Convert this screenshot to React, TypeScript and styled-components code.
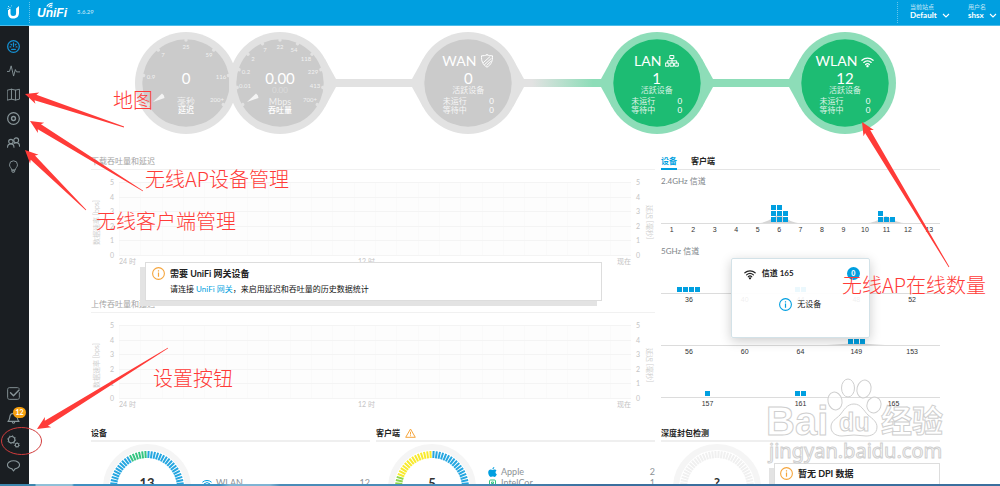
import React from "react";
import styled, { createGlobalStyle, css } from "styled-components";

const color = {
  blue: "#009fe0",
  green: "#1dbc73",
  paleGreen: "#8dddb8",
  gray: "#cbcbcb",
  paleGray: "#e2e2e2",
  orange: "#f5a53c",
  red: "#ff3b38",
  text: "#8d9296",
  dark: "#222",
};

const Global = createGlobalStyle`
  * { box-sizing: border-box; }
  html, body { margin: 0; padding: 0; background: #fff; }
  body { font-family: Lato, "Noto Sans CJK SC", sans-serif; font-size: 8px; line-height: 14px; color: ${color.dark}; }
  button { margin: 0; padding: 0; border: 0; background: none; font: inherit; color: inherit; cursor: pointer; text-align: left; }
  a { color: inherit; text-decoration: none; }
  h2, h3, p, ul { margin: 0; padding: 0; font: inherit; list-style: none; }
  svg { display: block; flex: none; }
`;

const Shell = styled.div`
  position: relative;
  display: flex;
  flex-direction: column;
  height: 100vh;
  overflow: hidden;
`;

/* ---------- header ---------- */

const Header = styled.header`
  display: flex;
  align-items: stretch;
  flex: none;
  height: 26px;
  color: #fff;
  background: ${color.blue};
  border-bottom: 1px solid #4dbce9;
`;

const Mark = styled.div`
  display: flex;
  align-items: center;
  width: 29px;
  padding: 0 0 2px 7px;
`;

const Divider = styled.div`
  margin: 2px 0;
  border-left: 1px dotted rgba(255, 255, 255, 0.4);
`;

const Wordmark = styled.a`
  position: relative;
  margin-left: 7px;
  padding-top: 6px;
  font: italic bold 12px/14px "Liberation Sans Narrow", "Liberation Sans", sans-serif;
  svg { position: absolute; left: 9px; top: 2px; }
`;

const Version = styled.span`
  margin-left: 10px;
  font-size: 6px;
  line-height: 24px;
  font-weight: bold;
  color: rgba(255, 255, 255, 0.65);
`;

const Account = styled.div`
  display: flex;
  margin-left: auto;
`;

const Menu = styled.button<{ $width: number }>`
  display: block;
  width: ${(p) => p.$width}px;
  padding-bottom: 3px;
  small { display: block; font-size: 6px; line-height: 8px; color: rgba(255, 255, 255, 0.75); }
  span { display: flex; align-items: center; gap: 5px; font-weight: bold; line-height: 9px; }
`;

/* ---------- sidebar ---------- */

const Body = styled.div`
  display: flex;
  flex: 1;
  min-height: 0;
`;

const Sidebar = styled.nav`
  display: flex;
  flex-direction: column;
  justify-content: space-between;
  flex: none;
  width: 29px;
  padding: 8px 0 7px;
  background: #1a1e22;
`;

const NavItem = styled.a<{ $active?: boolean }>`
  position: relative;
  display: flex;
  align-items: center;
  justify-content: center;
  height: 24px;
  padding-right: 2px;
  color: ${(p) => (p.$active ? "#1590d2" : "#89969a")};
`;

const Count = styled.span`
  position: absolute;
  top: 2px;
  left: 13px;
  width: 13px;
  border-radius: 6px;
  background: #f7a00f;
  color: #fff;
  font-size: 7px;
  font-weight: bold;
  line-height: 11px;
  text-align: center;
`;

/* ---------- main ---------- */

const Main = styled.main`
  flex: 1;
  min-width: 0;
  padding: 6px 60px 0 62px;
  overflow-y: auto;
  scrollbar-width: none;
`;

const Health = styled.section`
  display: flex;
  align-items: center;
  padding: 0 44px;
  margin-bottom: 20px;
`;

const Link = styled.div<{ $from: string; $to: string }>`
  flex: 1;
  height: 8px;
  background: linear-gradient(90deg, ${(p) => p.$from} 15%, ${(p) => p.$to} 85%);
`;

const Disc = styled.div<{ $overlap?: boolean; $dial?: boolean }>`
  position: relative;
  flex: none;
  width: 102px;
  height: 102px;
  margin-left: ${(p) => (p.$overlap ? "-8px" : 0)};
  padding-top: ${(p) => (p.$dial ? 39 : 21)}px;
  color: #fff;
  text-align: center;
  > svg { position: absolute; inset: 0; overflow: visible; }
`;

const DiscText = styled.div`
  position: relative;
`;

const DiscTitle = styled.h2`
  display: flex;
  justify-content: center;
  align-items: center;
  gap: 4px;
  margin-bottom: 2px;
  font-size: 14px;
  line-height: 16px;
`;

const DiscValue = styled.div`
  font-size: 15px;
  line-height: 15px;
`;

const DiscNote = styled.div<{ $faint?: boolean }>`
  height: 8px;
  margin-bottom: 3px;
  line-height: 8px;
  opacity: ${(p) => (p.$faint ? 0.3 : 0.8)};
`;

const DiscUnit = styled.div<{ $strong?: boolean }>`
  line-height: 9px;
  font-size: ${(p) => (p.$strong ? 8 : 9)}px;
  font-weight: ${(p) => (p.$strong ? 500 : 400)};
  opacity: ${(p) => (p.$strong ? 1 : 0.7)};
`;

const DiscRow = styled.div`
  display: flex;
  justify-content: space-between;
  width: 51px;
  margin: 0 auto;
  line-height: 9px;
  span { opacity: 0.85; }
`;

const Columns = styled.div`
  display: grid;
  grid-template-columns: repeat(3, minmax(0, 1fr));
  column-gap: 6px;
  row-gap: 17px;
`;

const Charts = styled.section`
  position: relative;
  grid-column: span 2;
  display: flex;
  flex-direction: column;
  gap: 31px;
`;

const ChartTitle = styled.h3`
  height: 16px;
  border-bottom: 1px solid #f1f1f1;
  color: #a3a3a3;
`;

const ChartGrid = styled.div`
  display: grid;
  grid-template-columns: 16px 12px 1fr 14px 10px;
  padding-top: 8px;
  color: #c4c4c4;
  font-size: 7px;
`;

const AxisName = styled.div<{ $up?: boolean }>`
  align-self: center;
  justify-self: ${(p) => (p.$up ? "start" : "center")};
  writing-mode: vertical-rl;
  text-orientation: sideways;
  line-height: 10px;
  white-space: nowrap;
  color: #cfcfcf;
  ${(p) => p.$up && css`transform: rotate(180deg);`}
`;

const Scale = styled.div<{ $right?: boolean }>`
  display: flex;
  flex-direction: column;
  justify-content: space-between;
  height: 81px;
  padding-left: ${(p) => (p.$right ? 5 : 3)}px;
  line-height: 8px;
`;

const Plot = styled.div`
  display: flex;
  flex-direction: column;
  justify-content: space-between;
  height: 74px;
  margin-top: 4px;
  background: repeating-linear-gradient(90deg, #fafafa 0 1px, #fdfdfd 1px calc(100% / 24));
  i { height: 1px; background: #f4f4f4; }
`;

const Times = styled.div`
  display: grid;
  grid-template-columns: 12fr 13fr auto;
  line-height: 10px;
`;

const Notice = styled.aside`
  display: grid;
  grid-template-columns: 13px 1fr;
  column-gap: 5px;
  padding: 4px 6px;
  background: #fff;
  border: 1px solid #ddd;
  box-shadow: -5px 5px 0 #e3e3e3;
  h3 { font-size: 9px; font-weight: bold; line-height: 13px; }
  p { grid-column: 2; margin-top: 3px; line-height: 13px; color: #111; }
  a { color: ${color.blue}; }
`;

const GatewayNotice = styled(Notice)`
  position: absolute;
  top: 108px;
  left: 54px;
  right: 53px;
`;

/* ---------- channels ---------- */

const Channels = styled.section`
  position: relative;
`;

const Tabs = styled.div`
  display: flex;
  gap: 14px;
  height: 16px;
  border-bottom: 1px solid #e5e5e5;
`;

const Tab = styled.button<{ $active?: boolean }>`
  height: 16px;
  font-weight: bold;
  color: ${(p) => (p.$active ? color.blue : color.dark)};
  border-bottom: 2px solid ${(p) => (p.$active ? color.blue : "transparent")};
`;

const Band = styled.h3`
  padding-top: 4px;
  height: 18px;
  color: #7d8488;
`;

const BandRows = styled.div`
  display: flex;
  flex-direction: column;
  gap: 5px;
  & + ${Band} { margin-top: 5px; }
`;

const ChannelRow = styled.ul`
  display: flex;
`;

const ChannelCell = styled.li`
  flex: 1;
  font: 7px/11px "Liberation Sans", sans-serif;
  color: #333;
  text-align: center;
`;

const Stack = styled.div`
  position: relative;
  display: flex;
  justify-content: center;
  align-items: flex-end;
  gap: 1px;
  height: 36px;
  padding-bottom: 1px;
  border-bottom: 1px solid #dcdcdc;
  > svg { position: absolute; bottom: 0; left: 50%; transform: translateX(-50%); }
`;

const Pile = styled.div`
  position: relative;
  display: flex;
  flex-direction: column;
  gap: 1px;
  i { width: 5px; height: 5px; background: ${color.blue}; }
`;

const Popup = styled.div`
  position: absolute;
  top: 104px;
  left: 25%;
  width: 139px;
  height: 80px;
  padding: 8px 9px 0 12px;
  border: 1px solid #d3e2e8;
  border-radius: 2px;
  background: rgba(255, 255, 255, 0.92);
  box-shadow: 0 3px 12px rgba(0, 0, 0, 0.2);
`;

const PopupHead = styled.div`
  display: flex;
  align-items: center;
  gap: 6px;
  font-weight: bold;
  line-height: 13px;
  b { width: 13px; margin-left: auto; border-radius: 50%; background: ${color.blue}; color: #fff; font-size: 7px; text-align: center; }
`;

const PopupBody = styled.div`
  display: flex;
  align-items: center;
  justify-content: center;
  gap: 5px;
  margin-top: 17px;
  padding-right: 3px;
`;

/* ---------- summary cards ---------- */

const Card = styled.section`
  min-width: 0;
`;

const CardTitle = styled.h3`
  display: flex;
  align-items: center;
  gap: 5px;
  height: 16px;
  border-bottom: 2px solid #efefef;
  font-weight: bold;
`;

const CardBody = styled.div`
  display: flex;
  align-items: flex-start;
  height: 90px;
  padding: 2px 0 0 12px;
`;

const Dial = styled.div`
  position: relative;
  flex: none;
  width: 88px;
  height: 88px;
  span { position: absolute; left: 0; right: 0; top: 32px; font-size: 13px; line-height: 14px; font-weight: bold; text-align: center; color: #333; }
`;

const Legend = styled.ul<{ $offset: number }>`
  flex: 1;
  margin-left: 11px;
  padding-top: ${(p) => p.$offset}px;
  font-size: 9px;
  line-height: 11px;
  color: ${color.text};
  li { display: flex; align-items: center; gap: 4px; }
  b { margin-left: auto; font-weight: 400; }
`;

const Bullet = styled.span<{ $tone: string }>`
  display: flex;
  justify-content: center;
  width: 10px;
  color: ${(p) => p.$tone};
`;

const DpiNotice = styled(Notice)`
  flex: 1;
  height: 40px;
  margin: 19px 0 0 13px;
  padding: 3px 5px;
`;

const Taskbar = styled.footer`
  flex: none;
  height: 2px;
  background: linear-gradient(90deg, #3c86ad 0 35px, #8fc0d8 36px 72px, #3f8fc0 74px 22%, #7fb4d4 23% 27%, #4a8cb8 28% 46%, #3b6f9e 60% 100%);
`;

/* ---------- overlays ---------- */

const Annotations = styled.div`
  position: absolute;
  inset: 0;
  pointer-events: none;
  > svg { position: absolute; inset: 0; width: 100%; height: 100%; }
`;

const Caption = styled.span<{ $x: number; $y: number }>`
  position: absolute;
  left: ${(p) => p.$x}px;
  top: ${(p) => p.$y}px;
  font: 300 20px/24px "Noto Sans CJK SC", sans-serif;
  color: ${color.red};
  white-space: nowrap;
`;

const Watermark = styled.svg`
  position: absolute;
  right: 50px;
  bottom: 18px;
  pointer-events: none;
  fill: rgba(255, 255, 255, 0.5);
  stroke: #cfcfcf;
  stroke-width: 1;
`;

/* ---------- icons ---------- */

function Icon({ size = 13, width = 1, children }: { size?: number; width?: number; children: React.ReactNode }) {
  return (
    <svg width={size} height={size} viewBox="0 0 14 14" fill="none" stroke="currentColor" strokeWidth={width} strokeLinejoin="round" strokeLinecap="round" aria-hidden="true">
      {children}
    </svg>
  );
}

const Wifi = ({ size = 13 }: { size?: number }) => (
  <Icon size={size} width={1.4}>
    <path d="M1 5.6a9 9 0 0 1 12 0M3 8a6 6 0 0 1 8 0M5 10.2a3 3 0 0 1 4 0" />
    <circle cx="7" cy="12" r=".6" fill="currentColor" />
  </Icon>
);

const Info = ({ tone }: { tone: string }) => (
  <svg width="13" height="13" viewBox="0 0 13 13" fill="none" stroke={tone} aria-hidden="true">
    <circle cx="6.5" cy="6.5" r="5.9" strokeWidth="1.1" />
    <path d="M6.5 5.6v4.2M6.5 3.2v1.2" strokeWidth="1.2" />
  </svg>
);

const Chevron = () => (
  <svg width="8" height="5" viewBox="0 0 8 5" fill="none" stroke="currentColor" strokeWidth="1.1" aria-hidden="true">
    <path d="M1 1l3 3 3-3" />
  </svg>
);

const Shield = () => (
  <Icon size={14}>
    <path d="M7 .8c1.700.8 3.500 1 5.500 1 .2 5-1 8.700-5.500 11.400C2.500 10.500 1.300 6.800 1.500 1.800c2 0 3.800-.2 5.500-1z" />
    <path d="M3.500 8.500L9.800 2.800M4.700 10.500l6.500-6M6.800 11.300l4.200-4" />
  </Icon>
);

const Network = () => (
  <Icon size={14}>
    <path d="M5.200 1.500h3.600v3H5.200zM.7 9h3.200v3.200H.7zM5.400 9h3.200v3.200H5.400zM10.100 9h3.200v3.200h-3.200zM7 4.500V9M2.300 9V6.800h9.400V9" />
  </Icon>
);

const topNav = [
  { name: "仪表盘", icon: <><circle cx="7" cy="7" r="6.3" strokeWidth="1.4" /><path d="M7 3v4M3.300 7.500h.8M9.900 7.500h.8M4.300 4.600l.6.6M9.700 4.600l-.6.6M5 10h4" strokeWidth="1.4" /></> },
  { name: "统计", icon: <path d="M.4 8h2.300l1.800-6 2.600 11 1.900-7 1.200 2.500h3.600" /> },
  { name: "地图", icon: <path d="M.6 2.300l4.200-1 4.400 1 4.200-1v10.700l-4.200 1-4.400-1-4.200 1zM4.800 1.300v10.700M9.200 2.300v10.700" /> },
  { name: "设备", icon: <><circle cx="7" cy="7" r="6.3" strokeWidth="1.3" /><circle cx="7" cy="7" r="2.1" strokeWidth="1.5" /></> },
  { name: "客户端", icon: <><circle cx="4.200" cy="6" r="2.400" strokeWidth="1.200" /><circle cx="9.900" cy="4.600" r="2.600" strokeWidth="1.200" /><path d="M.6 12c0-2.300 1.400-3.500 3.600-3.500s3.300 1.200 3.300 3.500M7.600 8c.6-.7 1.300-.9 2.300-.9 2.300 0 3.600 1.400 3.600 4" strokeWidth="1.200" /></> },
  { name: "洞察", icon: <path d="M5 10.200C5 8.500 2.700 7.700 2.700 5.200a4.300 4.300 0 0 1 8.600 0c0 2.500-2.300 3.300-2.300 5zM5.400 11.500h3.200l-.8 1.700H6.200z" /> },
];

const bottomNav = [
  { name: "任务", icon: <><path d="M13.300 6v5.400c0 1.100-.8 1.900-1.900 1.900H2.600c-1.100 0-1.900-.8-1.900-1.900V2.600C.7 1.500 1.500.7 2.600.7h8.800c.8 0 1.300.3 1.600.9" /><path d="M3.800 6.200L7 9.400l6-6.200" strokeWidth="1.500" /></> },
  { name: "警报", badge: "12", icon: <path d="M1 11.200h12C11 9.600 11.300 7.800 10.800 5.600A3.900 3.900 0 0 0 7 2.500a3.900 3.900 0 0 0-3.800 3.100c-.5 2.200-.2 4-2.200 5.600zM5.700 11.500c0 2.200 2.600 2.200 2.600 0" strokeWidth="1.200" /> },
  { name: "设置", icon: <><circle cx="5" cy="5" r="3.400" strokeWidth="1.200" /><circle cx="5" cy="5" r="4.300" strokeDasharray="1.300 2.050" strokeLinecap="butt" /><circle cx="10.800" cy="10.800" r="1.900" strokeWidth="1.200" /><circle cx="10.800" cy="10.800" r="2.700" strokeDasharray="1 1.400" strokeLinecap="butt" /></> },
  { name: "聊天", icon: <path d="M5.400 10.600C2.500 10.200.5 8.600.5 6.300.5 3.900 3.300 1.900 7 1.900s6.500 2 6.500 4.400c0 2.300-2 3.900-4.900 4.300L7 12.900z" strokeWidth="1.200" /> },
];

/* ---------- health discs ---------- */

type DialMark = [string, number, number];

const latencyMarks: DialMark[] = [["0.9", -35, -6], ["7", -23, -28], ["25", 0, -36], ["59", 23, -28], ["116", 35, -6], ["200+", 31, 17]];
const speedMarks: DialMark[] = [["0.01", -35, 3], ["0.2", -34, -11], ["2", -27, -24], ["7", -15, -33], ["22", 0, -36], ["54", 14, -33], ["118", 26, -24], ["229", 33, -11], ["413", 35, 3], ["700+", 30, 17]];

function DiscShape({ ring, fill, left, right, marks, steps = 0 }: { ring: string; fill: string; left?: boolean; right?: boolean; marks?: DialMark[]; steps?: number }) {
  return (
    <svg width="102" height="102" viewBox="-51 -51 102 102" aria-hidden="true">
      <circle r="51" fill={ring} />
      {left && <path d="M-44.700 -24.600L-56 -4V4L-44.700 24.600z" fill={ring} />}
      {right && <path d="M44.700 -24.600L56 -4V4L44.700 24.600z" fill={ring} />}
      <circle r="43.7" fill={fill} />
      {marks && (
        <>
          {Array.from({ length: steps + 1 }, (_, i) => (
            <circle key={i} cy="-43" r="1.7" fill={ring} transform={`rotate(${-120 + (240 / steps) * i})`} />
          ))}
          {marks.map(([label, x, y]) => (
            <text key={label} x={x} y={y + 2} fontSize="6" textAnchor="middle" fill="#fff" fillOpacity=".75">{label}</text>
          ))}
          <path d="M-33 19L-24 10.500q2.500 1.500 2.500 4.500z" fill="#f4f4f4" />
        </>
      )}
    </svg>
  );
}

function Meter({ value, sub, unit, name, marks, steps, right }: { value: string; sub?: string; unit: string; name: string; marks: DialMark[]; steps: number; right?: boolean }) {
  return (
    <Disc $dial $overlap={right}>
      <DiscShape ring={color.paleGray} fill={color.gray} marks={marks} steps={steps} right={right} />
      <DiscText>
        <DiscValue>{value}</DiscValue>
        <DiscNote $faint>{sub}</DiscNote>
        <DiscUnit>{unit}</DiscUnit>
        <DiscUnit $strong>{name}</DiscUnit>
      </DiscText>
    </Disc>
  );
}

function Status({ name, icon, value, up, right }: { name: string; icon: React.ReactNode; value: number; up?: boolean; right?: boolean }) {
  return (
    <Disc>
      <DiscShape ring={up ? color.paleGreen : color.paleGray} fill={up ? color.green : color.gray} left right={right} />
      <DiscText>
        <DiscTitle>{name}{icon}</DiscTitle>
        <DiscValue>{value}</DiscValue>
        <DiscNote>活跃设备</DiscNote>
        <DiscRow><span>未运行</span>0</DiscRow>
        <DiscRow><span>等待中</span>0</DiscRow>
      </DiscText>
    </Disc>
  );
}

/* ---------- charts ---------- */

const levels = [5, 4, 3, 2, 1, 0];

function History({ title }: { title: string }) {
  return (
    <div>
      <ChartTitle>{title}</ChartTitle>
      <ChartGrid>
        <AxisName $up>数据速率 [bps]</AxisName>
        <Scale>{levels.map((n) => <span key={n}>{n}</span>)}</Scale>
        <div>
          <Plot>{levels.map((n) => <i key={n} />)}</Plot>
          <Times><span>24 时</span><span>12 时</span><span>现在</span></Times>
        </div>
        <Scale $right>{levels.map((n) => <span key={n}>{n}</span>)}</Scale>
        <AxisName>延迟 [毫秒]</AxisName>
      </ChartGrid>
    </div>
  );
}

type Channel = { id: number; piles?: number[]; spread?: [number, number] };

const band24: Channel[] = Array.from({ length: 13 }, (_, i) => {
  const id = i + 1;
  if (id === 6) return { id, piles: [3, 3, 2], spread: [38, 9] };
  if (id === 11) return { id, piles: [2, 1, 1], spread: [36, 7] };
  return { id };
});

const band5: Channel[][] = [
  [{ id: 36, piles: [1, 1, 1, 1] }, { id: 40 }, { id: 44, piles: [1, 1] }, { id: 48 }, { id: 52 }],
  [{ id: 56 }, { id: 60 }, { id: 64 }, { id: 149, piles: [1, 1, 1], spread: [68, 2] }, { id: 153 }],
  [{ id: 157, piles: [1] }, { id: 161, piles: [1, 1] }, { id: 165 }],
];

function Row({ channels }: { channels: Channel[] }) {
  return (
    <ChannelRow>
      {channels.map(({ id, piles = [], spread }) => (
        <ChannelCell key={id}>
          <Stack>
            {spread && (
              <svg width={spread[0]} height={spread[1]} viewBox="0 0 10 10" preserveAspectRatio="none" aria-hidden="true">
                <path d="M0 10C2 9 3 5 5 0c2 5 3 9 5 10z" fill="#d6d6d6" />
              </svg>
            )}
            {piles.map((n, i) => (
              <Pile key={i}>{Array.from({ length: n }, (_, k) => <i key={k} />)}</Pile>
            ))}
          </Stack>
          {id}
        </ChannelCell>
      ))}
    </ChannelRow>
  );
}

function TickDial({ value, tone }: { value: string; tone: (angle: number) => string }) {
  return (
    <Dial>
      <svg width="88" height="88" viewBox="-44 -44 88 88" aria-hidden="true">
        <circle r="41" fill="none" stroke="#f5f5f5" strokeWidth="6" />
        {Array.from({ length: 72 }, (_, i) => {
          const angle = i * 5 + 2.5;
          return <path key={i} d="M0 -37V-30" stroke={tone(angle)} strokeWidth="2" transform={`rotate(${angle})`} />;
        })}
      </svg>
      <span>{value}</span>
    </Dial>
  );
}

function AccountMenu({ label, value, width }: { label: string; value: string; width: number }) {
  return (
    <Menu $width={width}>
      <small>{label}</small>
      <span>{value}<Chevron /></span>
    </Menu>
  );
}

/* ---------- arrows ---------- */

function arrow([x1, y1]: number[], [x2, y2]: number[]) {
  const length = Math.hypot(x2 - x1, y2 - y1);
  const dx = (x2 - x1) / length;
  const dy = (y2 - y1) / length;
  const at = (along: number, side: number) => `${x1 + dx * along - dy * side},${y1 + dy * along + dx * side}`;
  return [at(0, 0), at(13, 6), at(11, 3), at(length, 0.4), at(length, -0.4), at(11, -3), at(13, -6)].join(" ");
}

const arrows = [
  [[25, 94], [124, 127]],
  [[30, 121], [143, 191]],
  [[25, 150], [86, 210]],
  [[37, 429], [168, 348]],
  [[862, 122], [949, 267]],
];

export default function App() {
  return (
    <Shell>
      <Global />
      <Header>
        <Mark>
          <svg width="13" height="14" viewBox="0 0 13 14" aria-hidden="true">
            <path d="M3.500 3.500V8c0 2 .8 3 2.600 3 2.400 0 3-1 3-3V3.500L12 1v6.500c0 3.800-1.800 6-5.700 6C2.700 13.500 1 11.500 1 8V5h1V4h1.500z" fill="#fff" />
            <path d="M1 1h1v1H1zM2.500 2.200h1v1h-1zM.5 3h1v1h-1zM4 .5h.8v.8H4z" fill="#fff" opacity=".8" />
          </svg>
        </Mark>
        <Divider />
        <Wordmark href="#">
          UniFi
          <svg width="10" height="7" viewBox="0 0 10 7" fill="none" stroke="#fff" strokeWidth="1.1" aria-hidden="true">
            <path d="M.8 4.500C2 2.200 4 1 6.800 1.200M2.600 5.200C3.500 3.800 4.800 3 6.500 3.200M4.500 6c.5-.7 1-1 1.800-1" />
          </svg>
        </Wordmark>
        <Version>5.6.29</Version>
        <Account>
          <Divider />
          <AccountMenuGroup>
            <AccountMenu label="当前站点" value="Default" width={58} />
            <AccountMenu label="用户名" value="shsx" width={32} />
          </AccountMenuGroup>
        </Account>
      </Header>

      <Body>
        <Sidebar>
          <div>
            {topNav.map((item, i) => (
              <NavItem key={item.name} href="#" aria-label={item.name} $active={i === 0}>
                <Icon>{item.icon}</Icon>
              </NavItem>
            ))}
          </div>
          <div>
            {bottomNav.map((item) => (
              <NavItem key={item.name} href="#" aria-label={item.name}>
                <Icon>{item.icon}</Icon>
                {item.badge && <Count>{item.badge}</Count>}
              </NavItem>
            ))}
          </div>
        </Sidebar>

        <Main>
          <Health>
            <Meter value="0" unit="毫秒" name="延迟" marks={latencyMarks} steps={6} />
            <Meter value="0.00" sub="0.00" unit="Mbps" name="吞吐量" marks={speedMarks} steps={10} right />
            <Link $from={color.paleGray} $to={color.paleGray} />
            <Status name="WAN" icon={<Shield />} value={0} right />
            <Link $from={color.paleGray} $to={color.paleGreen} />
            <Status name="LAN" icon={<Network />} value={1} up right />
            <Link $from={color.paleGreen} $to={color.paleGreen} />
            <Status name="WLAN" icon={<Wifi />} value={12} up />
          </Health>

          <Columns>
            <Charts>
              <History title="下载吞吐量和延迟" />
              <History title="上传吞吐量和延迟" />
              <GatewayNotice>
                <Info tone={color.orange} />
                <h3>需要 UniFi 网关设备</h3>
                <p>请连接 <a href="#">UniFi 网关</a>，来启用延迟和吞吐量的历史数据统计</p>
              </GatewayNotice>
            </Charts>

            <Channels>
              <Tabs role="tablist">
                <Tab role="tab" aria-selected="true" $active>设备</Tab>
                <Tab role="tab" aria-selected="false">客户端</Tab>
              </Tabs>
              <Band>2.4GHz 信道</Band>
              <BandRows><Row channels={band24} /></BandRows>
              <Band>5GHz 信道</Band>
              <BandRows>{band5.map((row) => <Row key={row[0].id} channels={row} />)}</BandRows>
              <Popup>
                <PopupHead><Wifi size={12} />信道 165<b>0</b></PopupHead>
                <PopupBody><Info tone={color.blue} />无设备</PopupBody>
              </Popup>
            </Channels>

            <Card>
              <CardTitle>设备</CardTitle>
              <CardBody>
                <TickDial value="13" tone={(a) => (a > 330 ? "#35c481" : "#25a6e0")} />
                <Legend $offset={33}>
                  <li><Bullet $tone={color.blue}><Wifi size={10} /></Bullet>WLAN<b>12</b></li>
                </Legend>
              </CardBody>
            </Card>

            <Card>
              <CardTitle>
                客户端
                <svg width="11" height="10" viewBox="0 0 11 10" fill="none" stroke={color.orange} aria-hidden="true">
                  <path d="M5.500 1L10.300 9.300H.7zM5.500 3.800v2.700M5.500 7.300v.9" />
                </svg>
              </CardTitle>
              <CardBody>
                <TickDial value="5" tone={(a) => (a < 216 ? "#25a6e0" : a < 288 ? "#8fd84a" : "#f8ea2e")} />
                <Legend $offset={22}>
                  <li>
                    <Bullet $tone={color.blue}>
                      <svg width="9" height="10" viewBox="0 0 9 10" fill="currentColor" aria-hidden="true">
                        <path d="M6.300 0c.1 1.200-.7 2.200-1.900 2.300C4.300 1.200 5.200.2 6.300 0zM4.500 3c.5 0 1-.5 2-.5.9 0 1.600.5 2 1C7 4.500 7.200 6.600 8.800 7.200 8.300 8.700 7.400 10 6.400 10c-.7 0-1-.4-1.800-.4S3.500 10 2.900 10C1.500 10 .2 7.600.2 5.600c0-2 1.200-3.100 2.500-3.100C3.500 2.500 4.100 3 4.500 3z" />
                      </svg>
                    </Bullet>
                    Apple<b>2</b>
                  </li>
                  <li>
                    <Bullet $tone="#35c481">
                      <svg width="9" height="7" viewBox="0 0 9 7" fill="none" stroke="currentColor" aria-hidden="true">
                        <path d="M2.500 1h4a1 1 0 0 1 1 1v3a1 1 0 0 1-1 1h-4a1 1 0 0 1-1-1V2a1 1 0 0 1 1-1zM3.500 3h2v1.500h-2z" />
                      </svg>
                    </Bullet>
                    IntelCor<b>1</b>
                  </li>
                </Legend>
              </CardBody>
            </Card>

            <Card>
              <CardTitle>深度封包检测</CardTitle>
              <CardBody>
                <TickDial value="?" tone={() => "#f0f0f0"} />
                <DpiNotice>
                  <Info tone={color.orange} />
                  <h3>暂无 DPI 数据</h3>
                </DpiNotice>
              </CardBody>
            </Card>
          </Columns>
        </Main>
      </Body>
      <Taskbar />

      <Watermark width="184" height="90" viewBox="0 0 184 90" aria-label="Baidu 经验">
        <text x="0" y="57" fontFamily="Liberation Sans, sans-serif" fontWeight="bold" fontSize="40">Bai</text>
        <ellipse cx="69" cy="23" rx="7" ry="9" transform="rotate(-12 69 23)" />
        <ellipse cx="82" cy="10" rx="6.5" ry="9" />
        <ellipse cx="98" cy="11" rx="7" ry="9" transform="rotate(14 98 11)" />
        <ellipse cx="108" cy="27" rx="7" ry="8" transform="rotate(20 108 27)" />
        <path d="M88 26c7 0 10 7 14 11 5 4 9 7 9 12 0 7-6 9-11 9-4 0-8-1-12-1s-8 1-12 1c-6 0-11-3-11-9s5-8 9-12c4-5 7-11 14-11z" />
        <text x="73" y="53" fontFamily="Liberation Sans, sans-serif" fontWeight="bold" fontSize="25">du</text>
        <text x="115" y="54" fontFamily="Noto Sans CJK SC, sans-serif" fontWeight="bold" fontSize="31">经验</text>
        <text x="3" y="80" fontFamily="Noto Sans, sans-serif" fontSize="20">jingyan.baidu.com</text>
      </Watermark>

      <Annotations>
        <svg aria-hidden="true">
          {arrows.map(([tip, tail], i) => <polygon key={i} points={arrow(tip, tail)} fill={color.red} />)}
          <ellipse cx="21.5" cy="441" rx="20" ry="13.5" fill="none" stroke="#d23c3c" />
        </svg>
        <Caption $x={113} $y={88}>地图</Caption>
        <Caption $x={145} $y={167}>无线AP设备管理</Caption>
        <Caption $x={96} $y={209}>无线客户端管理</Caption>
        <Caption $x={153} $y={366}>设置按钮</Caption>
        <Caption $x={842} $y={273}>无线AP在线数量</Caption>
      </Annotations>
    </Shell>
  );
}

const AccountMenuGroup = styled.div`
  display: flex;
  margin-left: 12px;
`;
